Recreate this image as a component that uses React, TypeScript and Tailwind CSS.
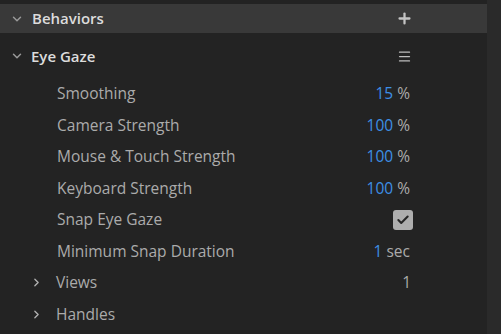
import { ChevronDown, ChevronRight, Plus, Menu, Check } from "lucide-react";

const props = [
  { label: "Smoothing", value: "15", unit: "%" },
  { label: "Camera Strength", value: "100", unit: "%" },
  { label: "Mouse & Touch Strength", value: "100", unit: "%" },
  { label: "Keyboard Strength", value: "100", unit: "%" },
];

function Row({ children }: { children: React.ReactNode }) {
  return <div className="flex h-[31.5px] items-center pl-[57px] pr-[77px]">{children}</div>;
}

export default function App() {
  return (
    <div
      className="flex h-[334px] w-[501px] overflow-hidden bg-[#1e1e1e] text-[15.5px]"
      style={{ fontFamily: '"Open Sans", "Noto Sans", sans-serif' }}
    >
      <div className="flex flex-1 flex-col bg-[#232323] pt-1">
        {/* section header */}
        <div className="flex h-[29px] items-center bg-[#393939] pl-[10px] pr-[74px] text-[15px] text-[#dcdcdc]">
          <ChevronDown size={14} strokeWidth={2.5} className="text-[#9a9a9a]" />
          <span className="ml-[8px] font-semibold">Behaviors</span>
          <Plus size={17} strokeWidth={3.2} className="ml-auto text-[#c4c4c4]" />
        </div>

        <div className="flex h-[46px] items-center pl-[10px] pr-[75px] text-[15px] text-[#dcdcdc]">
          <ChevronDown size={14} strokeWidth={2.5} className="text-[#9a9a9a]" />
          <span className="ml-[7px] font-semibold">Eye Gaze</span>
          <Menu size={15} strokeWidth={2} className="ml-auto text-[#bdbdbd]" />
        </div>

        <div className="-mt-[1px] text-[#ababab]">
          {props.map((p) => (
            <Row key={p.label}>
              <span>{p.label}</span>
              <span className="ml-auto">
                <span className="text-[#3d8fe6]">{p.value}</span> {p.unit}
              </span>
            </Row>
          ))}
          <Row>
            <span>Snap Eye Gaze</span>
            <span className="ml-auto -mr-[3px] flex h-[20px] w-[20px] items-center justify-center rounded-[3px] bg-[#aeaeae]">
              <Check size={14} strokeWidth={3.5} className="text-[#262626]" />
            </span>
          </Row>
          <Row>
            <span>Minimum Snap Duration</span>
            <span className="ml-auto">
              <span className="text-[#3d8fe6]">1</span> sec
            </span>
          </Row>
          <div className="flex h-[31.5px] items-center pl-[30px] pr-[76px]">
            <ChevronRight size={13} strokeWidth={2.5} className="text-[#b0b0b0]" />
            <span className="ml-[13px]">Views</span>
            <span className="ml-auto">1</span>
          </div>
          <div className="flex h-[31.5px] items-center pl-[30px] pr-[76px]">
            <ChevronRight size={13} strokeWidth={2.5} className="text-[#b0b0b0]" />
            <span className="ml-[13px]">Handles</span>
          </div>
        </div>
      </div>
      <div className="w-[14px] bg-[#2a2a2a]" />
    </div>
  );
}
